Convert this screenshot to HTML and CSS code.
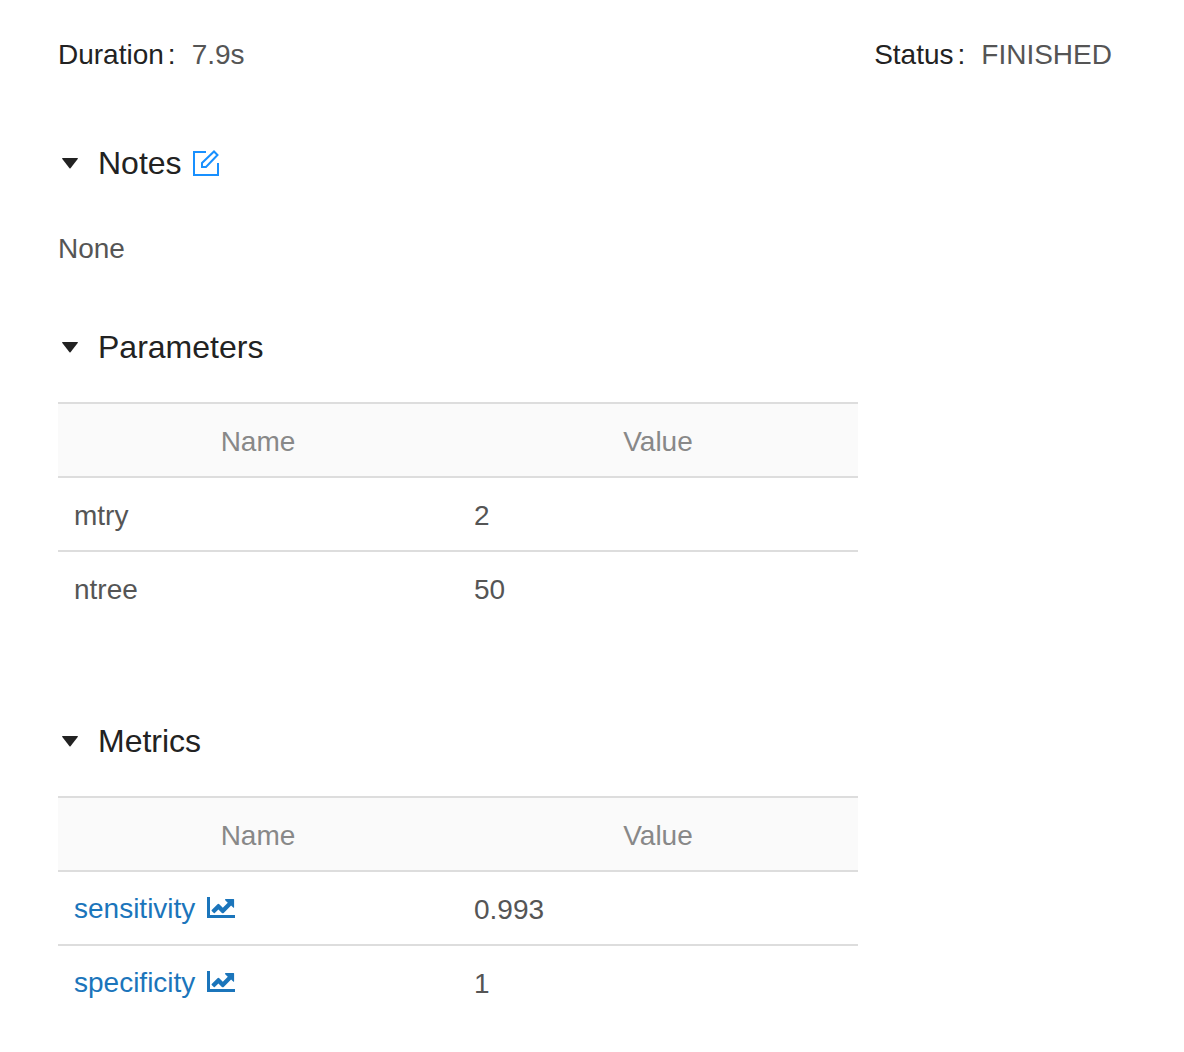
FILE: index.html
```html
<!DOCTYPE html>
<html lang="en">
<head>
<meta charset="utf-8">
<title>Run details</title>
<link rel="stylesheet" href="styles.css">
</head>
<body>
<svg class="defs" aria-hidden="true">
  <symbol id="caret" viewBox="0 0 16 12"><path d="M.6 1h14.800q.9 .1.300.900L8.500 11.200q-.5.500-1 0L.300 1.900Q-.3 1.100.6 1z"/></symbol>
  <symbol id="chart" viewBox="0 0 28 21"><path d="M0 0h3v18h25v3H0zM18.500 2h8.100q.5 0 .5.500v7.800q-.1.900-.9.300l-2.100-2.100-7.400 7.400q-.9.800-1.800 0L11.400 12.400 7.800 16q-.5.500-1 0L4.700 14q-.4-.5 0-1L10.500 7.200q.9-.8 1.800 0l3.500 3.500 5-5-2.400-2.300q-.9-1.100.1-1.400z"/></symbol>
</svg>
<main class="run">
  <dl class="meta">
    <div class="meta-item"><dt>Duration<span class="colon">:</span></dt><dd>7.9s</dd></div>
    <div class="meta-item meta-status"><dt>Status<span class="colon">:</span></dt><dd>FINISHED</dd></div>
  </dl>
  <section class="section notes">
    <h2><button class="toggle" type="button"><svg class="caret"><use href="#caret"/></svg>Notes</button>
      <a class="edit" href="#edit" aria-label="Edit notes"><svg viewBox="0 0 26 26"><path d="M13 2H1v23h24V13M9 17v-4L21 1.500 24.500 5 13 17z"/></svg></a></h2>
    <p>None</p>
  </section>
  <section class="section">
    <h2><button class="toggle" type="button"><svg class="caret"><use href="#caret"/></svg>Parameters</button></h2>
    <table>
      <thead><tr><th scope="col">Name</th><th scope="col">Value</th></tr></thead>
      <tbody><tr><td>mtry</td><td>2</td></tr><tr><td>ntree</td><td>50</td></tr></tbody>
    </table>
  </section>
  <section class="section">
    <h2><button class="toggle" type="button"><svg class="caret"><use href="#caret"/></svg>Metrics</button></h2>
    <table>
      <thead><tr><th scope="col">Name</th><th scope="col">Value</th></tr></thead>
      <tbody>
        <tr><td><a class="metric" href="#sensitivity">sensitivity<svg class="chart"><use href="#chart"/></svg></a></td><td>0.993</td></tr>
        <tr><td><a class="metric" href="#specificity">specificity<svg class="chart"><use href="#chart"/></svg></a></td><td>1</td></tr>
      </tbody>
    </table>
  </section>
</main>
</body>
</html>
```
FILE: styles.css
```css
* { box-sizing: border-box; }
body { margin: 0; background: #fff; color: #555; font: 28px/40px "Liberation Sans", Arial, sans-serif; }
.defs { position: absolute; width: 0; height: 0; }
.run { padding: 35px 58px 32px; }
.meta { display: flex; flex-wrap: wrap; justify-content: space-between; margin: 0 0 66px; }
.meta-item { display: flex; }
.meta-status { margin-right: 14px; }
.meta dt { color: #222; }
.meta dd { margin: 0 0 0 16px; }
.colon { margin-left: 4px; }
.section { margin-bottom: 95px; }
.section:last-child { margin-bottom: 0; }
.notes { margin-bottom: 56px; }
h2 { display: flex; align-items: center; gap: 11px; height: 44px; margin: 0 0 33px; font-size: 32px; font-weight: 400; color: #222; }
.toggle { display: flex; align-items: center; gap: 20px; padding: 0 0 0 4px; border: 0; background: none; color: inherit; font: inherit; cursor: pointer; }
.caret { width: 16px; height: 12px; fill: #222; }
.edit { width: 26px; height: 26px; }
.edit svg { display: block; fill: none; stroke: #1890ff; stroke-width: 2; }
p { margin: 0; padding-top: 11px; }
table { width: 100%; max-width: 800px; border-collapse: separate; border-spacing: 0; table-layout: fixed; }
th, td { height: 74px; padding: 4px 16px 0; text-align: left; font-weight: 400; border-top: 2px solid #ddd; }
th { background: #fafafa; color: #888; text-align: center; }
.metric { display: flex; align-items: center; gap: 12px; margin-bottom: 2px; color: #1b75bb; text-decoration: none; }
.chart { width: 28px; height: 21px; margin-bottom: 4px; fill: currentColor; }
```
